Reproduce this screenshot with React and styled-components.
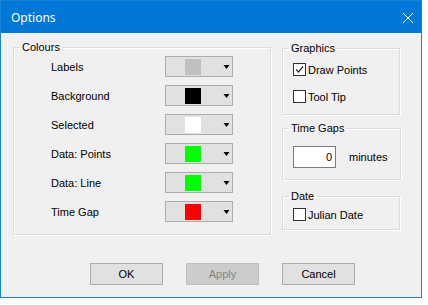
import React from 'react';
import styled, { createGlobalStyle } from 'styled-components';

const GlobalStyle = createGlobalStyle`
  html, body {
    margin: 0;
    background: #ffffff;
  }
  body {
    font-family: "Liberation Sans", Arial, sans-serif;
    font-size: 11px;
    color: #000;
  }
`;

const Window = styled.div`
  width: 422px;
  height: 298px;
  box-sizing: border-box;
  border: 1px solid #1883d7;
  background: #f0f0f0;
  display: flex;
  flex-direction: column;
`;

const TitleBar = styled.div`
  height: 32px;
  flex: none;
  background: #0078d7;
  color: #fff;
  display: flex;
  align-items: center;
  justify-content: space-between;
  padding: 0 7px 0 10px;
  font-family: "Noto Sans", "Open Sans", sans-serif;
  font-size: 12px;
`;

const CloseIcon = styled.svg`
  width: 12px;
  height: 12px;
  margin-top: 2px;
`;

const Body = styled.div`
  flex: 1;
  padding: 8px 0 0 12px;
  display: flex;
  flex-direction: column;
`;

const Main = styled.div`
  display: flex;
  gap: 11px;
`;

const Group = styled.fieldset`
  margin: ${p => p.$mt || 0}px 0 0 0;
  padding: 0;
  min-width: 0;
  box-sizing: border-box;
  width: ${p => p.$w}px;
  height: ${p => p.$h}px;
  border: 1px solid #dcdcdc;
  box-shadow: inset 1px 1px 0 #fff, 1px 1px 0 #fff;
`;

const Legend = styled.legend`
  padding: 0 2px;
  margin-left: 6px;
  line-height: 13px;
`;

const GroupContent = styled.div`
  padding: ${p => p.$pad};
`;

const ColourGrid = styled.div`
  display: grid;
  grid-template-columns: 114px 68px;
  grid-auto-rows: 21px;
  row-gap: 8px;
  align-items: center;
`;

const Combo = styled.div`
  height: 21px;
  box-sizing: border-box;
  border: 1px solid #adadad;
  background: #e1e1e1;
  display: flex;
  align-items: center;
  padding: 0 2px 0 19px;
`;

const Swatch = styled.div`
  width: 16px;
  height: 16px;
  background: ${p => p.$c};
`;

const Arrow = styled.svg`
  margin-left: auto;
  width: 7px;
  height: 4px;
`;

const RightCol = styled.div`
  display: flex;
  flex-direction: column;
  margin-top: 1px;
`;

const CheckRow = styled.label`
  display: flex;
  align-items: center;
  gap: 2px;
  height: 13px;
  margin-bottom: ${p => p.$mb || 0}px;
`;

const Box = styled.span`
  width: 13px;
  height: 13px;
  box-sizing: border-box;
  border: 1px solid #333;
  background: #fff;
  display: flex;
  align-items: center;
  justify-content: center;
`;

const InputRow = styled.div`
  display: flex;
  align-items: center;
`;

const NumberBox = styled.div`
  width: 43px;
  height: 22px;
  box-sizing: border-box;
  border: 1px solid #7a7a7a;
  background: #fff;
  text-align: right;
  padding-right: 3px;
  line-height: 20px;
  margin-right: 13px;
`;

const Footer = styled.div`
  display: flex;
  gap: 23px;
  margin-top: auto;
  margin-bottom: 12px;
  padding-left: 77px;
`;

const Button = styled.div`
  width: 73px;
  height: 22px;
  box-sizing: border-box;
  border: 1px solid ${p => (p.$disabled ? '#bfbfbf' : '#adadad')};
  background: ${p => (p.$disabled ? '#cccccc' : '#e1e1e1')};
  color: ${p => (p.$disabled ? '#838383' : '#000')};
  display: flex;
  align-items: center;
  justify-content: center;
`;

const colours = [
  ['Labels', '#c0c0c0'],
  ['Background', '#000000'],
  ['Selected', '#ffffff'],
  ['Data: Points', '#00ff00'],
  ['Data: Line', '#00ff00'],
  ['Time Gap', '#ff0000'],
];

const CheckBox = ({ checked }) => (
  <Box>
    {checked && (
      <svg width="9" height="9" viewBox="0 0 9 9">
        <polyline points="1,4.5 3.5,7 8,1.5" fill="none" stroke="#333" strokeWidth="1.3" />
      </svg>
    )}
  </Box>
);

export default function App() {
  return (
    <>
      <GlobalStyle />
      <Window>
        <TitleBar>
          <span>Options</span>
          <CloseIcon viewBox="0 0 12 12">
            <path d="M1 1 L11 11 M11 1 L1 11" stroke="#fff" strokeWidth="1" />
          </CloseIcon>
        </TitleBar>
        <Body>
          <Main>
            <Group $w={258} $h={194}>
              <Legend>Colours</Legend>
              <GroupContent $pad="2px 0 0 37px">
                <ColourGrid>
                  {colours.map(([name, c]) => (
                    <React.Fragment key={name}>
                      <span>{name}</span>
                      <Combo>
                        <Swatch $c={c} />
                        <Arrow viewBox="0 0 7 4">
                          <polygon points="0.5,0 6.5,0 3.5,4" fill="#000" />
                        </Arrow>
                      </Combo>
                    </React.Fragment>
                  ))}
                </ColourGrid>
              </GroupContent>
            </Group>
            <RightCol>
              <Group $w={118} $h={73}>
                <Legend>Graphics</Legend>
                <GroupContent $pad="8px 0 0 10px">
                  <CheckRow $mb={14}><CheckBox checked />Draw Points</CheckRow>
                  <CheckRow><CheckBox />Tool Tip</CheckRow>
                </GroupContent>
              </Group>
              <Group $w={119} $h={58} $mt={7}>
                <Legend>Time Gaps</Legend>
                <GroupContent $pad="11px 0 0 10px">
                  <InputRow>
                    <NumberBox>0</NumberBox>
                    minutes
                  </InputRow>
                </GroupContent>
              </Group>
              <Group $w={118} $h={40} $mt={10}>
                <Legend>Date</Legend>
                <GroupContent $pad="5px 0 0 10px">
                  <CheckRow><CheckBox />Julian Date</CheckRow>
                </GroupContent>
              </Group>
            </RightCol>
          </Main>
          <Footer>
            <Button>OK</Button>
            <Button $disabled>Apply</Button>
            <Button>Cancel</Button>
          </Footer>
        </Body>
      </Window>
    </>
  );
}
